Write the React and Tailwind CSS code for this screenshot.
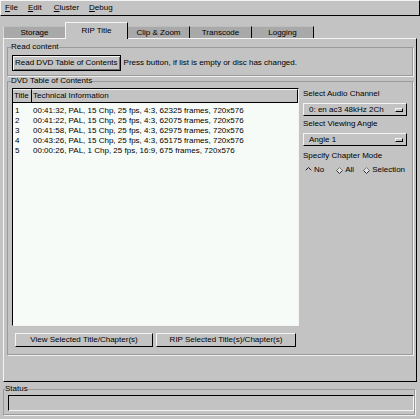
const rows = [
  ['1', '00:41:32, PAL, 15 Chp, 25 fps, 4:3, 62325 frames, 720x576'],
  ['2', '00:41:22, PAL, 15 Chp, 25 fps, 4:3, 62075 frames, 720x576'],
  ['3', '00:41:58, PAL, 15 Chp, 25 fps, 4:3, 62975 frames, 720x576'],
  ['4', '00:43:26, PAL, 15 Chp, 25 fps, 4:3, 65175 frames, 720x576'],
  ['5', '00:00:26, PAL, 1 Chp, 25 fps, 16:9, 675 frames, 720x576'],
]

const tabs = ['Storage', 'RIP Title', 'Clip & Zoom', 'Transcode', 'Logging']

function Diamond({ on }) {
  return (
    <svg width="7" height="7" viewBox="0 0 7 7" className="shrink-0">
      {!on && <polygon points="3.5,0.5 6.5,3.5 3.5,6.5 0.5,3.5" fill="#e2e2e2" />}
      <polyline points="0.5,3.5 3.5,0.5 6.5,3.5" fill="none" stroke={on ? '#202020' : '#7a7a7a'} strokeWidth="1" />
      <polyline points="0.5,3.5 3.5,6.5 6.5,3.5" fill="none" stroke={on ? '#c3c3c3' : '#303030'} strokeWidth="1" />
    </svg>
  )
}

function OptionMenu({ label }) {
  return (
    <div className="flex h-[13px] items-center justify-between border border-t-[#f4f4f4] border-l-[#f4f4f4] border-r-black border-b-black pl-[5px] pr-[3px]">
      <span>{label}</span>
      <span className="h-[4px] w-[8px] border border-t-[#f4f4f4] border-l-[#f4f4f4] border-r-black border-b-black" />
    </div>
  )
}

export default function App() {
  return (
    <div className="flex h-[419px] w-[420px] flex-col overflow-hidden bg-[#c3c3c3] font-['Liberation_Sans',Arial,sans-serif] text-[8px] leading-[10px] text-black">
      {/* menu bar */}
      <div className="flex h-[16px] shrink-0 items-center gap-[10px] border border-t-[#f4f4f4] border-l-[#f4f4f4] border-r-black border-b-black pl-[4px]">
        <span><span className="underline">F</span>ile</span>
        <span><span className="underline">E</span>dit</span>
        <span className="ml-[2px]"><span className="underline">C</span>luster</span>
        <span><span className="underline">D</span>ebug</span>
      </div>

      {/* tabs */}
      <div className="mt-[6px] flex h-[16px] shrink-0 items-end pl-[3px]">
        {tabs.map((t) =>
          t === 'RIP Title' ? (
            <div
              key={t}
              className="relative z-10 -mb-px flex h-[17px] w-[63px] items-center justify-center border-t border-l border-r border-t-[#f4f4f4] border-l-[#f4f4f4] border-r-black bg-[#c3c3c3] pb-px"
            >
              {t}
            </div>
          ) : (
            <div
              key={t}
              className={
                t === 'Storage'
                  ? 'flex h-[12px] w-[62px] items-center justify-center border-t border-l border-t-[#bdbdbd] border-l-[#d8d8d8] bg-[#a9a9a9]'
                  : 'flex h-[12px] w-[62px] items-center justify-center border-t border-r border-t-[#bdbdbd] border-r-black bg-[#a9a9a9]'
              }
            >
              {t}
            </div>
          )
        )}
      </div>

      {/* notebook panel */}
      <div className="ml-[3px] flex h-[344px] w-[414px] shrink-0 flex-col border border-t-[#f4f4f4] border-l-[#f4f4f4] border-r-black border-b-black px-[3px] pt-[3px]">
        <fieldset className="border border-[#9a9a9a] px-[4px] pt-[3px] pb-[4px] shadow-[1px_1px_0_#f0f0f0]">
          <legend className="-ml-px leading-[10px]">Read content</legend>
          <div className="flex items-center">
            <button className="h-[16px] border border-black px-[2px] shadow-[inset_1px_1px_0_#f4f4f4,inset_-1px_-1px_0_#6b6b6b]">
              Read DVD Table of Contents
            </button>
            <span className="ml-[3px]">Press button, if list is empty or disc has changed.</span>
          </div>
        </fieldset>

        <fieldset className="border border-[#9a9a9a] px-[4px] pt-[2px] pb-[7px] shadow-[1px_1px_0_#f0f0f0]">
          <legend className="-ml-px leading-[10px]">DVD Table of Contents</legend>
          <div className="flex">
            <div className="flex h-[238px] w-[287px] flex-col border border-t-black border-l-black border-r-[#f4f4f4] border-b-[#f4f4f4] bg-[#f7fbf7]">
              <div className="flex h-[14px] shrink-0 bg-[#c3c3c3]">
                <div className="flex w-[19px] items-center border-r border-b border-t border-t-[#f4f4f4] border-r-black border-b-black pl-[1px]">
                  Title
                </div>
                <div className="flex flex-1 items-center border-r border-b border-t border-t-[#f4f4f4] border-r-black border-b-black pl-[1px]">
                  Technical Information
                </div>
              </div>
              <div className="flex flex-col pt-[3px]">
                {rows.map(([n, info]) => (
                  <div key={n} className="flex h-[10px] items-center">
                    <span className="w-[20px] pl-[2px]">{n}</span>
                    <span>{info}</span>
                  </div>
                ))}
              </div>
            </div>

            <div className="ml-[4px] flex w-[104px] flex-col">
              <span className="mt-[1px]">Select Audio Channel</span>
              <div className="mt-[4px]">
                <OptionMenu label="0: en ac3 48kHz 2Ch" />
              </div>
              <span className="mt-[3px]">Select Viewing Angle</span>
              <div className="mt-[4px]">
                <OptionMenu label="Angle 1" />
              </div>
              <span className="mt-[5px]">Specify Chapter Mode</span>
              <div className="mt-[4px] flex items-center">
                <span className="ml-[2px] flex items-center gap-[2px]">
                  <Diamond on />
                  <span>No</span>
                </span>
                <span className="ml-[12px] flex items-center gap-[2px]">
                  <Diamond />
                  <span>All</span>
                </span>
                <span className="ml-[9px] flex items-center gap-[2px]">
                  <Diamond />
                  <span>Selection</span>
                </span>
              </div>
            </div>
          </div>

          <div className="mt-[7px] ml-[3px] flex gap-[3px]">
            <button className="h-[14px] w-[138px] border border-t-[#f4f4f4] border-l-[#f4f4f4] border-r-black border-b-black">
              View Selected Title/Chapter(s)
            </button>
            <button className="h-[14px] w-[140px] border border-t-[#f4f4f4] border-l-[#f4f4f4] border-r-black border-b-black">
              RIP Selected Title(s)/Chapter(s)
            </button>
          </div>
        </fieldset>
      </div>

      {/* status */}
      <fieldset className="mt-[2px] ml-[3px] w-[412px] border border-[#9a9a9a] pl-[4px] pb-[3px] shadow-[1px_1px_0_#f0f0f0]">
        <legend className="-ml-[3px] leading-[10px]">Status</legend>
        <div className="mt-px h-[16px] border border-t-black border-l-black border-r-[#f4f4f4] border-b-[#f4f4f4]" />
      </fieldset>
    </div>
  )
}
